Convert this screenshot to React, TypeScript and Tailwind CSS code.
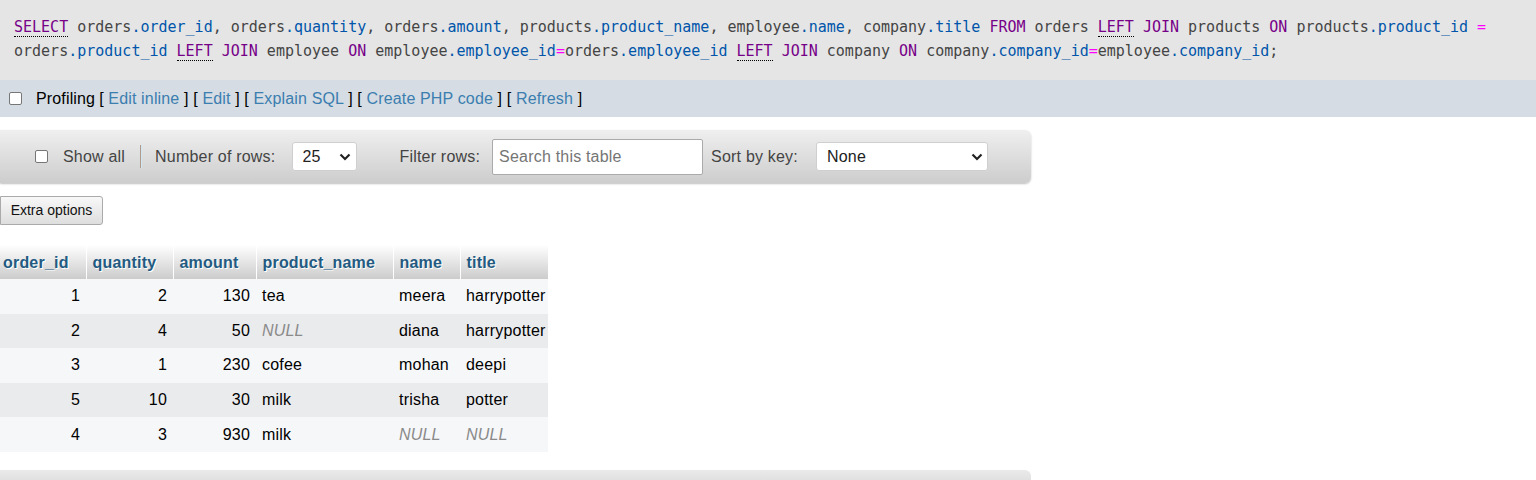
import React from "react";

type Tok = [string, string];

const C: Record<string, string> = {
  p: "text-[#444]",
  k: "text-[#770088]",
  u: "text-[#770088] border-b border-dotted border-black",
  v: "text-[#0055aa]",
  o: "text-[#ff00ff]",
};

const line1: Tok[] = [
  ["u", "SELECT"], ["p", " orders"], ["v", ".order_id"], ["p", ", orders"], ["v", ".quantity"],
  ["p", ", orders"], ["v", ".amount"], ["p", ", products"], ["v", ".product_name"],
  ["p", ", employee"], ["v", ".name"], ["p", ", company"], ["v", ".title"], ["p", " "],
  ["k", "FROM"], ["p", " orders "], ["u", "LEFT"], ["p", " "], ["k", "JOIN"], ["p", " products "],
  ["k", "ON"], ["p", " products"], ["v", ".product_id"], ["p", " "], ["o", "="],
];
const line2: Tok[] = [
  ["p", "orders"], ["v", ".product_id"], ["p", " "], ["u", "LEFT"], ["p", " "], ["k", "JOIN"],
  ["p", " employee "], ["k", "ON"], ["p", " employee"], ["v", ".employee_id"], ["o", "="],
  ["p", "orders"], ["v", ".employee_id"], ["p", " "], ["u", "LEFT"], ["p", " "], ["k", "JOIN"],
  ["p", " company "], ["k", "ON"], ["p", " company"], ["v", ".company_id"], ["o", "="],
  ["p", "employee"], ["v", ".company_id"], ["p", ";"],
];

function Line({ toks }: { toks: Tok[] }) {
  return (
    <div className="whitespace-pre h-6 leading-6">
      {toks.map((t, i) => (
        <span key={i} className={C[t[0]]}>
          {t[1]}
        </span>
      ))}
    </div>
  );
}

function Chevron() {
  return (
    <svg width="12" height="8" viewBox="0 0 12 8" className="shrink-0">
      <path d="M1.5 1.5 L6 6 L10.5 1.5" fill="none" stroke="#222" strokeWidth="2.2" />
    </svg>
  );
}

function Check({ className = "" }: { className?: string }) {
  return (
    <span
      className={
        "inline-block w-[13px] h-[13px] rounded-[2px] border border-[#767676] bg-white shrink-0 " +
        className
      }
    />
  );
}

const rows: (string | null)[][] = [
  ["1", "2", "130", "tea", "meera", "harrypotter"],
  ["2", "4", "50", null, "diana", "harrypotter"],
  ["3", "1", "230", "cofee", "mohan", "deepi"],
  ["5", "10", "30", "milk", "trisha", "potter"],
  ["4", "3", "930", "milk", null, null],
];

const heads = ["order_id", "quantity", "amount", "product_name", "name", "title"];
const widths = ["w-[86px]", "w-[87px]", "w-[83px]", "w-[137px]", "w-[67px]", "w-[88px]"];

export default function App() {
  const font = { fontFamily: '"Liberation Sans", Arial, sans-serif' };
  return (
    <div className="w-[1536px] h-[480px] overflow-hidden bg-white text-[#333] tracking-[0.2px]" style={font}>
      {/* SQL */}
      <div
        className="bg-[#e5e5e5] h-[80px] pt-[15px] pl-[14px] text-[15px] tracking-normal"
        style={{ fontFamily: '"DejaVu Sans Mono", "Liberation Mono", monospace' }}
      >
        <Line toks={line1} />
        <Line toks={line2} />
      </div>

      {/* Profiling bar */}
      <div className="bg-[#d5dce3] h-[37px] flex items-center pl-[9px] text-[16px] text-black tracking-[0.15px]">
        <Check />
        <span className="ml-[14px]">Profiling</span>
        <span className="ml-[4px] whitespace-pre">
          [ <span className="text-[#3b7eb0]">Edit inline</span> ] [ <span className="text-[#3b7eb0]">Edit</span> ] [ <span className="text-[#3b7eb0]">Explain SQL</span> ] [ <span className="text-[#3b7eb0]">Create PHP code</span> ] [ <span className="text-[#3b7eb0]">Refresh</span> ]
        </span>
      </div>

      {/* Nav bar */}
      <div className="mt-[13px] w-[1031px] h-[53px] rounded-r-[6px] bg-gradient-to-b from-[#efefef] to-[#cdcdcd] shadow-[0_1px_2px_rgba(0,0,0,0.25)] flex items-center pl-[35px] text-[16px] text-[#444]">
        <Check />
        <span className="ml-[15px]">Show all</span>
        <span className="ml-[15px] h-[23px] w-[2px] flex">
          <span className="w-px bg-[#b09a8a]" />
          <span className="w-px bg-[#cfe6f5]" />
        </span>
        <span className="ml-[13px]">Number of rows:</span>
        <div className="ml-[17px] w-[65px] h-[29px] bg-white border border-[#cfcfcf] rounded-[3px] flex items-center justify-between pl-[9px] pr-[5px] text-[#222]">
          <span>25</span>
          <Chevron />
        </div>
        <span className="ml-[42px]">Filter rows:</span>
        <div className="ml-[12px] w-[211px] h-[36px] bg-white border border-[#aaa] rounded-[2px] flex items-center pl-[6px] text-[#757575]">
          Search this table
        </div>
        <span className="ml-[8px]">Sort by key:</span>
        <div className="ml-[18px] w-[172px] h-[29px] bg-white border border-[#cfcfcf] rounded-[3px] flex items-center justify-between pl-[10px] pr-[4px] text-[#222]">
          <span>None</span>
          <Chevron />
        </div>
      </div>

      {/* Extra options */}
      <div className="mt-[13px] w-[103px] h-[29px] border border-[#aaa] rounded-r-[3px] bg-gradient-to-b from-[#f8f8f8] to-[#dedede] flex items-center justify-center text-[14px] text-[#111] tracking-normal">
        Extra options
      </div>

      {/* Table */}
      <table className="mt-[20px] border-collapse text-[16px]">
        <thead>
          <tr className="h-[34px] bg-gradient-to-b from-white to-[#cccccc]">
            {heads.map((h, i) => (
              <th
                key={h}
                className={
                  widths[i] +
                  " text-left font-bold text-[#235a81] p-0 align-middle pt-[1px] " +
                  (i === 0 ? "pl-[3px] " : "pl-[6px] ") +
                  (i < heads.length - 1 ? "border-r border-white" : "")
                }
                style={{ textShadow: "1px 1px 0 #fff" }}
              >
                {h}
              </th>
            ))}
          </tr>
        </thead>
        <tbody>
          {rows.map((r, ri) => (
            <tr key={ri} className={(ri % 2 === 0 ? "bg-[#f6f7f9]" : "bg-[#eaebed]") + " h-[34.6px]"}>
              {r.map((c, ci) => {
                const num = ci < 3;
                return (
                  <td
                    key={ci}
                    className={
                      "p-0 align-middle " +
                      (num ? "text-right pr-[6px] text-black " : "text-left pl-[6px] text-black ")
                    }
                  >
                    {c === null ? <i className="text-[#8a8a8a]">NULL</i> : c}
                  </td>
                );
              })}
            </tr>
          ))}
        </tbody>
      </table>

      {/* Bottom bar */}
      <div className="mt-[18px] w-[1031px] h-[20px] rounded-tr-[6px] bg-gradient-to-b from-[#eaeaea] to-[#d8d8d8]" />
    </div>
  );
}
